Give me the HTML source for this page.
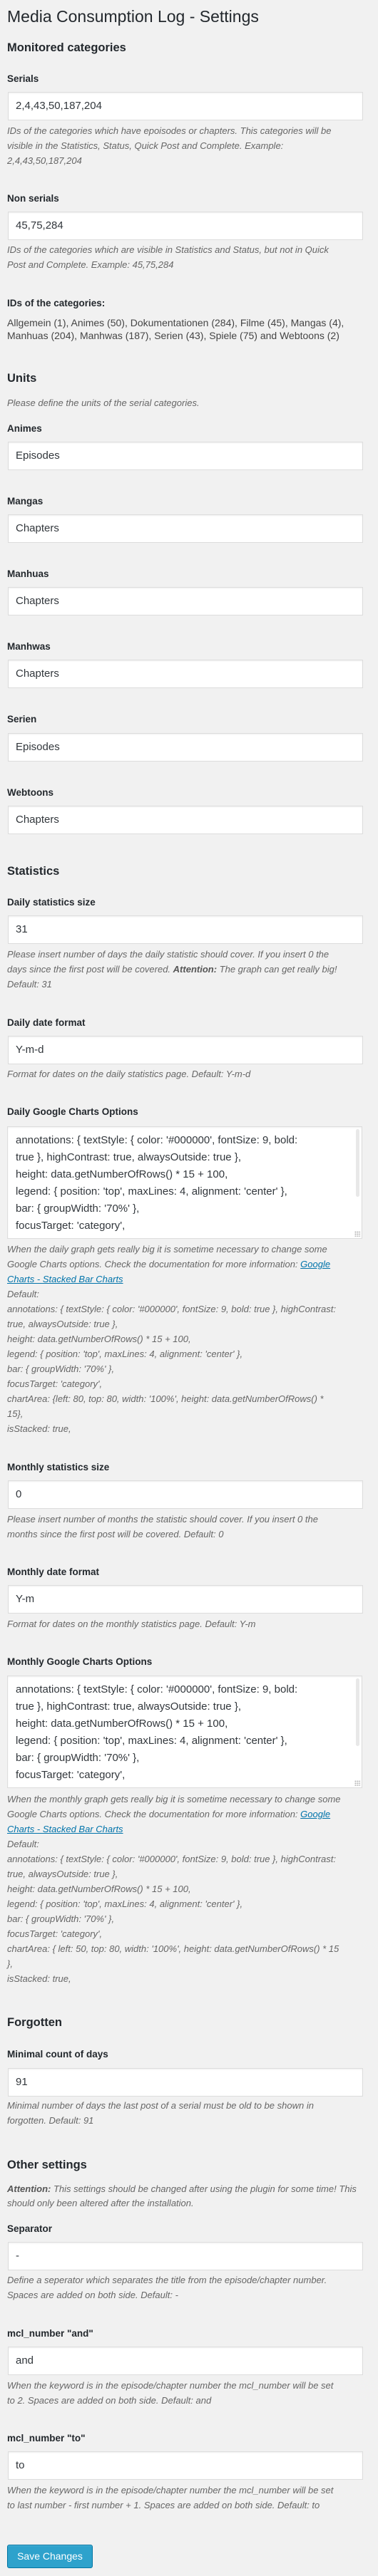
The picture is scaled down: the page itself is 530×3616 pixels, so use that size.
<!DOCTYPE html>
<html><head><meta charset="utf-8"><style>
html,body{margin:0;padding:0;background:#f1f1f1;width:530px;height:3616px;overflow:hidden;font-family:"Liberation Sans",sans-serif;color:#23282d}
.a{position:absolute;left:10px;white-space:nowrap}
.ti{font-size:23px;line-height:28px;top:9px}
.h{font-size:16.5px;font-weight:bold;line-height:22px}
.l{font-size:13.5px;font-weight:bold;line-height:18px}
.d{font-size:13px;font-style:italic;color:#666;line-height:21px}
.d b{color:#555}
.d a{color:#0073aa;text-decoration:underline}
.in{position:absolute;left:11px;height:38px;background:#fff;border:1px solid #ddd;box-shadow:inset 0 1px 2px rgba(0,0,0,.07);font-size:15px;line-height:38px;color:#32373c;padding-left:10px;box-sizing:content-box;width:486px}
.ta{position:absolute;left:10px;width:496px;height:156px;background:#fff;border:1px solid #ddd;box-shadow:inset 0 1px 2px rgba(0,0,0,.07);font-size:15px;line-height:24px;color:#32373c;overflow:hidden}
.ta .tx{position:absolute;left:11px;top:7px;white-space:nowrap}
.ta .sb{position:absolute;right:3px;top:3px;width:5px;height:95px;background:#e8e8e8;border-radius:3px}
.ta .gr{position:absolute;right:2px;bottom:2px;width:8px;height:8px;background:radial-gradient(#bbb 1px,transparent 1.2px) 0 0/3px 3px}
.btn{position:absolute;left:10px;top:3572px;width:118px;height:31px;background:#2ea2cc;border:1px solid #0074a2;border-radius:3px;color:#fff;font-size:14px;line-height:31px;text-align:center;box-shadow:inset 0 1px 0 rgba(120,200,230,.5)}
</style></head><body>
<div class="a ti">Media Consumption Log - Settings</div>

<div class="a h" style="top:56px">Monitored categories</div>
<div class="a l" style="top:102px">Serials</div>
<div class="in" style="top:129px">2,4,43,50,187,204</div>
<div class="a d" style="top:173px">IDs of the categories which have epoisodes or chapters. This categories will be<br>visible in the Statistics, Status, Quick Post and Complete. Example:<br>2,4,43,50,187,204</div>

<div class="a l" style="top:270px">Non serials</div>
<div class="in" style="top:297px">45,75,284</div>
<div class="a d" style="top:340px">IDs of the categories which are visible in Statistics and Status, but not in Quick<br>Post and Complete. Example: 45,75,284</div>

<div class="a l" style="top:417px">IDs of the categories:</div>
<div class="a" style="top:444px;font-size:14px;line-height:18px;color:#444">Allgemein (1), Animes (50), Dokumentationen (284), Filme (45), Mangas (4),<br>Manhuas (204), Manhwas (187), Serien (43), Spiele (75) and Webtoons (2)</div>

<div class="a h" style="top:520px">Units</div>
<div class="a d" style="top:555px">Please define the units of the serial categories.</div>

<div class="a l" style="top:593px">Animes</div>
<div class="in" style="top:620px">Episodes</div>
<div class="a l" style="top:695px">Mangas</div>
<div class="in" style="top:722px">Chapters</div>
<div class="a l" style="top:797px">Manhuas</div>
<div class="in" style="top:824px">Chapters</div>
<div class="a l" style="top:899px">Manhwas</div>
<div class="in" style="top:926px">Chapters</div>
<div class="a l" style="top:1001px">Serien</div>
<div class="in" style="top:1029px">Episodes</div>
<div class="a l" style="top:1104px">Webtoons</div>
<div class="in" style="top:1131px">Chapters</div>

<div class="a h" style="top:1212px">Statistics</div>
<div class="a l" style="top:1258px">Daily statistics size</div>
<div class="in" style="top:1285px">31</div>
<div class="a d" style="top:1329px">Please insert number of days the daily statistic should cover. If you insert 0 the<br>days since the first post will be covered. <b>Attention:</b> The graph can get really big!<br>Default: 31</div>

<div class="a l" style="top:1427px">Daily date format</div>
<div class="in" style="top:1454px">Y-m-d</div>
<div class="a d" style="top:1497px">Format for dates on the daily statistics page. Default: Y-m-d</div>

<div class="a l" style="top:1552px">Daily Google Charts Options</div>
<div class="ta" style="top:1581px"><div class="tx">annotations: { textStyle: { color: '#000000', fontSize: 9, bold:<br>true }, highContrast: true, alwaysOutside: true },<br>height: data.getNumberOfRows() * 15 + 100,<br>legend: { position: 'top', maxLines: 4, alignment: 'center' },<br>bar: { groupWidth: '70%' },<br>focusTarget: 'category',</div><div class="sb"></div><div class="gr"></div></div>
<div class="a d" style="top:1743px">When the daily graph gets really big it is sometime necessary to change some<br>Google Charts options. Check the documentation for more information: <a>Google</a><br><a>Charts - Stacked Bar Charts</a><br>Default:<br>annotations: { textStyle: { color: '#000000', fontSize: 9, bold: true }, highContrast:<br>true, alwaysOutside: true },<br>height: data.getNumberOfRows() * 15 + 100,<br>legend: { position: 'top', maxLines: 4, alignment: 'center' },<br>bar: { groupWidth: '70%' },<br>focusTarget: 'category',<br>chartArea: {left: 80, top: 80, width: '100%', height: data.getNumberOfRows() *<br>15},<br>isStacked: true,</div>

<div class="a l" style="top:2051px">Monthly statistics size</div>
<div class="in" style="top:2078px">0</div>
<div class="a d" style="top:2122px">Please insert number of months the statistic should cover. If you insert 0 the<br>months since the first post will be covered. Default: 0</div>

<div class="a l" style="top:2198px">Monthly date format</div>
<div class="in" style="top:2225px">Y-m</div>
<div class="a d" style="top:2269px">Format for dates on the monthly statistics page. Default: Y-m</div>

<div class="a l" style="top:2324px">Monthly Google Charts Options</div>
<div class="ta" style="top:2352px"><div class="tx">annotations: { textStyle: { color: '#000000', fontSize: 9, bold:<br>true }, highContrast: true, alwaysOutside: true },<br>height: data.getNumberOfRows() * 15 + 100,<br>legend: { position: 'top', maxLines: 4, alignment: 'center' },<br>bar: { groupWidth: '70%' },<br>focusTarget: 'category',</div><div class="sb"></div><div class="gr"></div></div>
<div class="a d" style="top:2515px">When the monthly graph gets really big it is sometime necessary to change some<br>Google Charts options. Check the documentation for more information: <a>Google</a><br><a>Charts - Stacked Bar Charts</a><br>Default:<br>annotations: { textStyle: { color: '#000000', fontSize: 9, bold: true }, highContrast:<br>true, alwaysOutside: true },<br>height: data.getNumberOfRows() * 15 + 100,<br>legend: { position: 'top', maxLines: 4, alignment: 'center' },<br>bar: { groupWidth: '70%' },<br>focusTarget: 'category',<br>chartArea: { left: 50, top: 80, width: '100%', height: data.getNumberOfRows() * 15<br>},<br>isStacked: true,</div>

<div class="a h" style="top:2828px">Forgotten</div>
<div class="a l" style="top:2875px">Minimal count of days</div>
<div class="in" style="top:2903px">91</div>
<div class="a d" style="top:2945px">Minimal number of days the last post of a serial must be old to be shown in<br>forgotten. Default: 91</div>

<div class="a h" style="top:3028px">Other settings</div>
<div class="a d" style="top:3063px;line-height:20px"><b>Attention:</b> This settings should be changed after using the plugin for some time! This<br>should only been altered after the installation.</div>

<div class="a l" style="top:3120px">Separator</div>
<div class="in" style="top:3147px">-</div>
<div class="a d" style="top:3190px">Define a seperator which separates the title from the episode/chapter number.<br>Spaces are added on both side. Default: -</div>

<div class="a l" style="top:3267px">mcl_number "and"</div>
<div class="in" style="top:3294px">and</div>
<div class="a d" style="top:3338px">When the keyword is in the episode/chapter number the mcl_number will be set<br>to 2. Spaces are added on both side. Default: and</div>

<div class="a l" style="top:3414px">mcl_number "to"</div>
<div class="in" style="top:3441px">to</div>
<div class="a d" style="top:3485px">When the keyword is in the episode/chapter number the mcl_number will be set<br>to last number - first number + 1. Spaces are added on both side. Default: to</div>

<div class="btn">Save Changes</div>
</body></html>
